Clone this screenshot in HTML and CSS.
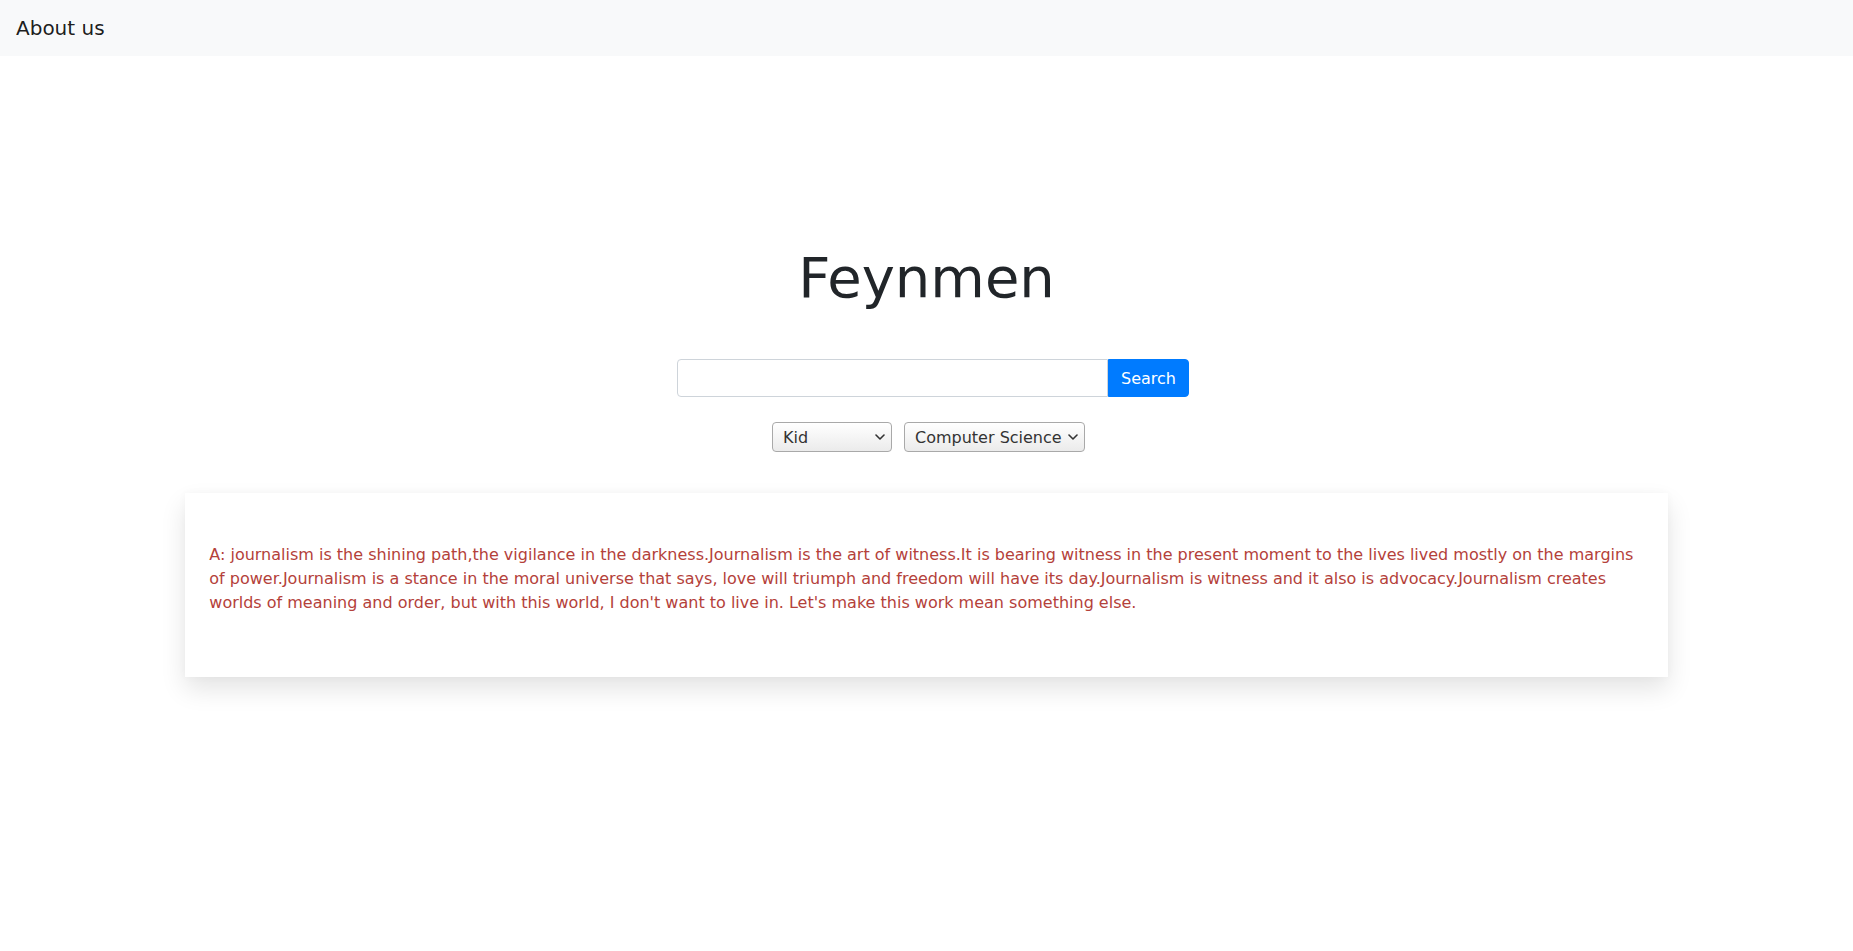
FILE: index.html
```html
<!DOCTYPE html>
<html lang="en">
<head>
<meta charset="utf-8">
<title>Feynmen</title>
<link rel="stylesheet" href="styles.css">
</head>
<body>
<nav class="navbar">
  <a class="brand" href="#">About us</a>
</nav>
<main class="main">
  <h1 class="title">Feynmen</h1>
  <form class="search">
    <input class="search-input" type="text">
    <button class="search-btn" type="button">Search</button>
  </form>
  <div class="filters">
    <div class="select-wrap">
      <select class="select select-kid">
        <option>Kid</option>
      </select>
      <svg class="chevron" width="10" height="6" viewBox="0 0 10 6"><path d="M1 1 L5 5 L9 1" fill="none" stroke="#333" stroke-width="1.6" stroke-linecap="round" stroke-linejoin="round"/></svg>
    </div>
    <div class="select-wrap">
      <select class="select select-topic">
        <option>Computer Science</option>
      </select>
      <svg class="chevron" width="10" height="6" viewBox="0 0 10 6"><path d="M1 1 L5 5 L9 1" fill="none" stroke="#333" stroke-width="1.6" stroke-linecap="round" stroke-linejoin="round"/></svg>
    </div>
  </div>
  <section class="card">
    <p class="answer">A: journalism is the shining path,the vigilance in the darkness.Journalism is the art of witness.It is bearing witness in the present moment to the lives lived mostly on the margins of power.Journalism is a stance in the moral universe that says, love will triumph and freedom will have its day.Journalism is witness and it also is advocacy.Journalism creates worlds of meaning and order, but with this world, I don't want to live in. Let's make this work mean something else.</p>
  </section>
</main>
</body>
</html>
```
FILE: styles.css
```css
* { box-sizing: border-box; }
body {
  margin: 0;
  font-family: "DejaVu Sans", sans-serif;
  color: #212529;
  background: #fff;
}
.navbar {
  height: 56px;
  padding: 8px 16px;
  background: #f8f9fa;
  display: flex;
  align-items: center;
}
.brand {
  font-size: 20px;
  line-height: 30px;
  padding: 5px 0;
  color: rgba(0,0,0,0.9);
  text-decoration: none;
}
.main {
  display: flex;
  flex-direction: column;
  align-items: center;
  padding-bottom: 40px;
}
.title {
  margin: 188px 0 0;
  font-size: 56px;
  line-height: 1.2;
  font-weight: 400;
  color: #212529;
}
.search {
  margin: 48px 0 0 13px;
  display: flex;
  width: 512px;
  height: 38px;
}
.search-input {
  flex: 1;
  height: 38px;
  border: 1px solid #ced4da;
  border-radius: 4px 0 0 4px;
  font-family: inherit;
  font-size: 16px;
  padding: 6px 12px;
  margin: 0;
  outline: none;
}
.search-btn {
  width: 81px;
  height: 38px;
  margin: 0;
  border: 1px solid #007bff;
  background: #007bff;
  color: #fff;
  font-family: inherit;
  font-size: 16px;
  border-radius: 0 4px 4px 0;
  padding: 0;
}
.filters {
  margin: 25px 0 0 4px;
  display: flex;
  gap: 12px;
}
.select-wrap {
  position: relative;
  height: 30px;
}
.select {
  appearance: none;
  -webkit-appearance: none;
  height: 30px;
  border: 1px solid #a9a9a9;
  border-radius: 4px;
  background: linear-gradient(#ffffff, #ebebeb);
  font-family: inherit;
  font-size: 16px;
  color: #333;
  padding: 0 20px 0 10px;
  margin: 0;
}
.select-kid { width: 120px; }
.select-topic { width: 181px; }
.chevron {
  position: absolute;
  right: 7px;
  top: 12px;
  pointer-events: none;
}
.card {
  margin-top: 41px;
  width: 80%;
  min-height: 184px;
  padding: 50px 24px 46px;
  background: #fff;
  box-shadow: 0 12px 24px rgba(0,0,0,0.11), 0 0 8px rgba(0,0,0,0.03);
}
.answer {
  margin: 0 0 16px;
  font-size: 16px;
  line-height: 24px;
  color: #b4413a;
}
```
